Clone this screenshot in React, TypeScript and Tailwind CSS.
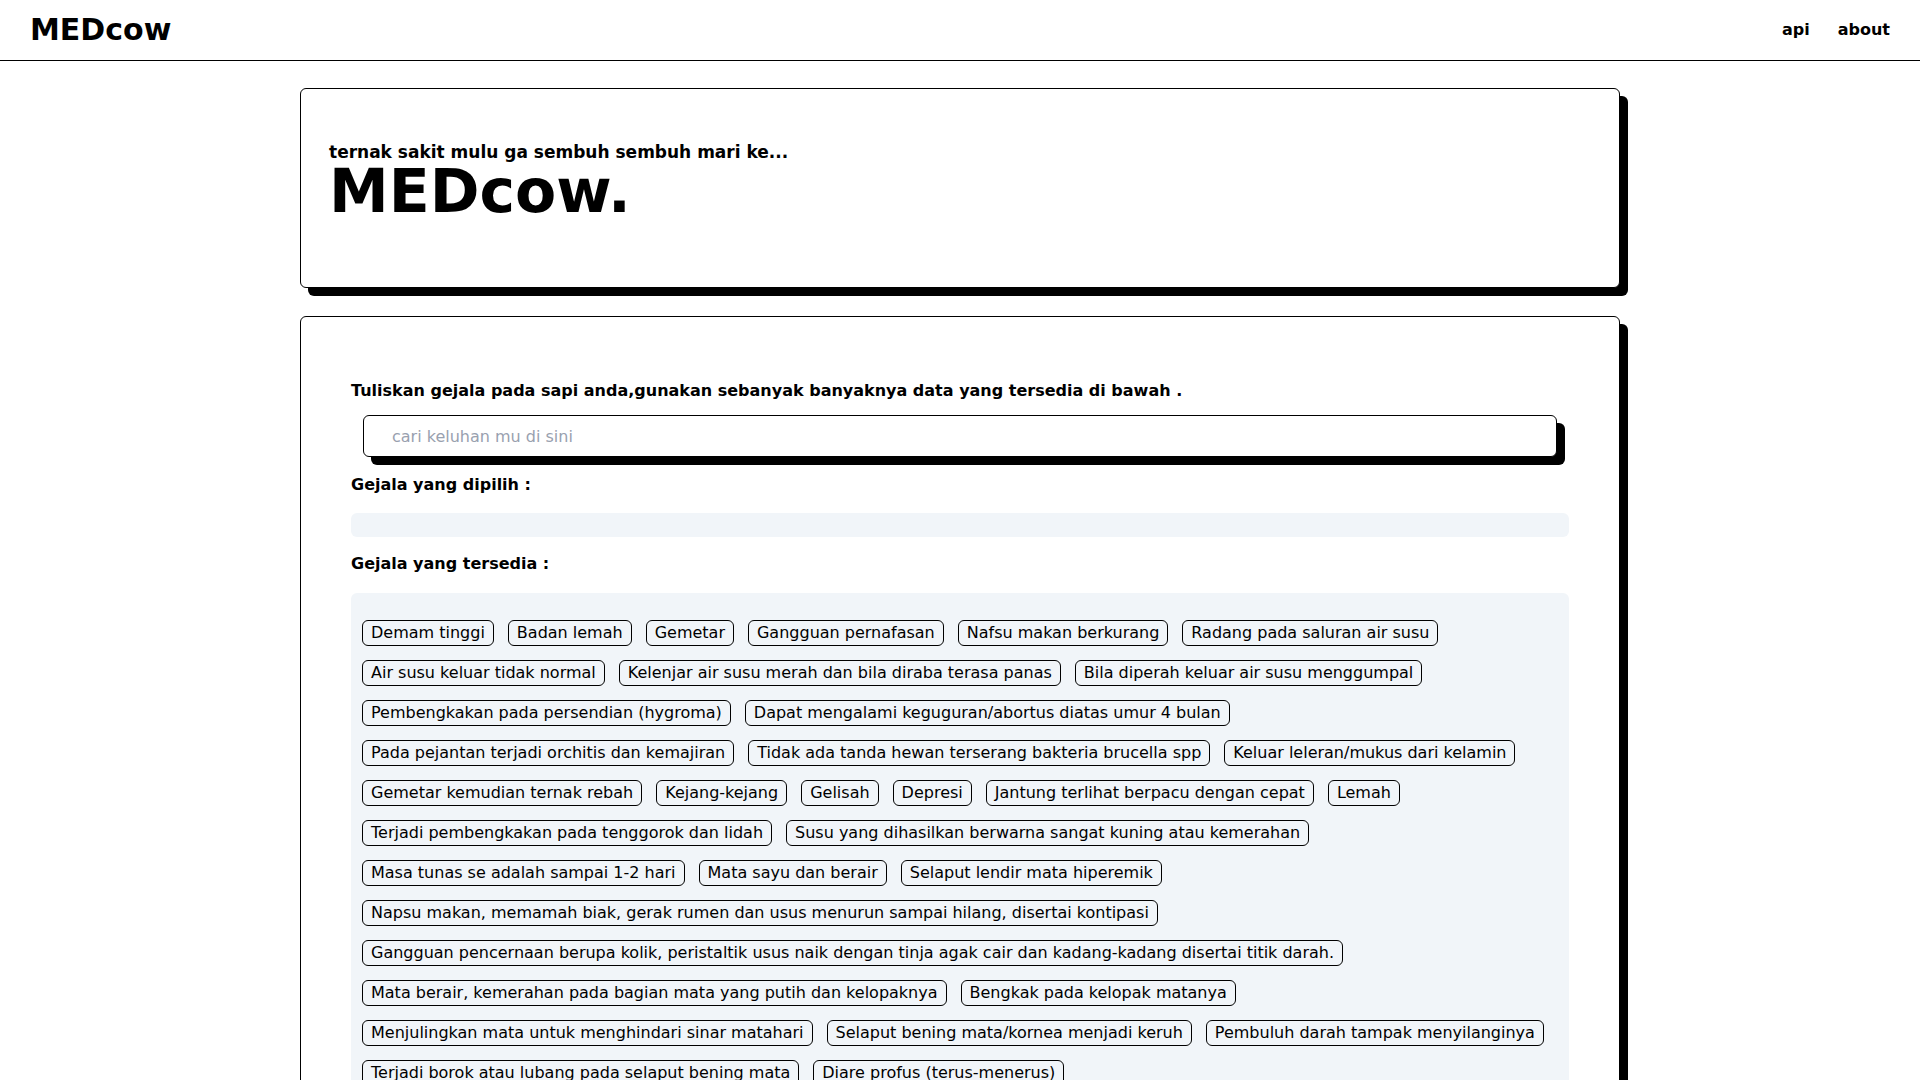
import React from "react";

const rows: string[] = [
  "Demam tinggi",
  "Badan lemah",
  "Gemetar",
  "Gangguan pernafasan",
  "Nafsu makan berkurang",
  "Radang pada saluran air susu",
  "Air susu keluar tidak normal",
  "Kelenjar air susu merah dan bila diraba terasa panas",
  "Bila diperah keluar air susu menggumpal",
  "Pembengkakan pada persendian (hygroma)",
  "Dapat mengalami keguguran/abortus diatas umur 4 bulan",
  "Pada pejantan terjadi orchitis dan kemajiran",
  "Tidak ada tanda hewan terserang bakteria brucella spp",
  "Keluar leleran/mukus dari kelamin",
  "Gemetar kemudian ternak rebah",
  "Kejang-kejang",
  "Gelisah",
  "Depresi",
  "Jantung terlihat berpacu dengan cepat",
  "Lemah",
  "Terjadi pembengkakan pada tenggorok dan lidah",
  "Susu yang dihasilkan berwarna sangat kuning atau kemerahan",
  "Masa tunas se adalah sampai 1-2 hari",
  "Mata sayu dan berair",
  "Selaput lendir mata hiperemik",
  "Napsu makan, memamah biak, gerak rumen dan usus menurun sampai hilang, disertai kontipasi",
  "Gangguan pencernaan berupa kolik, peristaltik usus naik dengan tinja agak cair dan kadang-kadang disertai titik darah.",
  "Mata berair, kemerahan pada bagian mata yang putih dan kelopaknya",
  "Bengkak pada kelopak matanya",
  "Menjulingkan mata untuk menghindari sinar matahari",
  "Selaput bening mata/kornea menjadi keruh",
  "Pembuluh darah tampak menyilanginya",
  "Terjadi borok atau lubang pada selaput bening mata",
  "Diare profus (terus-menerus)",
];

export default function App() {
  return (
    <div className="min-h-screen bg-white text-black font-['DejaVu_Sans',sans-serif]">
      <header className="h-[61px] border-b border-black flex items-center justify-between pl-[30px] pr-[30px]">
        <div className="text-3xl font-bold">MEDcow</div>
        <nav className="flex items-center gap-7 text-base font-bold">
          <a>api</a>
          <a>about</a>
        </nav>
      </header>

      <main className="w-[1320px] mx-auto pb-16">
        <section className="mt-[27px] h-[200px] border border-black rounded-md bg-white shadow-[8px_8px_0_0_#000] pt-[55px] px-7">
          <p className="text-[17px] font-bold leading-[17px]">ternak sakit mulu ga sembuh sembuh mari ke...</p>
          <h1 className="text-6xl font-bold leading-[60px]">MEDcow.</h1>
        </section>

        <section className="mt-7 border border-black rounded-md bg-white shadow-[8px_8px_0_0_#000] pt-[62px] px-[50px] pb-12">
          <p className="text-base font-bold leading-6">
            Tuliskan gejala pada sapi anda,gunakan sebanyak banyaknya data yang tersedia di bawah .
          </p>
          <div className="mx-3 mt-3">
            <input
              type="text"
              placeholder="cari keluhan mu di sini"
              className="w-full h-[42px] border border-black rounded-md bg-white px-7 text-base placeholder:text-gray-400 outline-none shadow-[8px_8px_0_0_#000]"
            />
          </div>
          <p className="mt-[16px] text-base font-bold leading-6">Gejala yang dipilih :</p>
          <div className="mt-[16px] h-6 rounded-md bg-[#f1f5f9]"></div>
          <p className="mt-[15px] text-base font-bold leading-6">Gejala yang tersedia :</p>
          <div className="mt-[17px] rounded-md bg-[#f1f5f9] pl-[11px] pr-[11px] pt-[27px] pb-[28px] flex flex-wrap gap-x-[14px] gap-y-[14px]">
            {rows.map((r) => (
              <span
                key={r}
                className="border border-black rounded-md px-2 text-base leading-6 whitespace-nowrap"
              >
                {r}
              </span>
            ))}
          </div>
        </section>
      </main>
    </div>
  );
}
